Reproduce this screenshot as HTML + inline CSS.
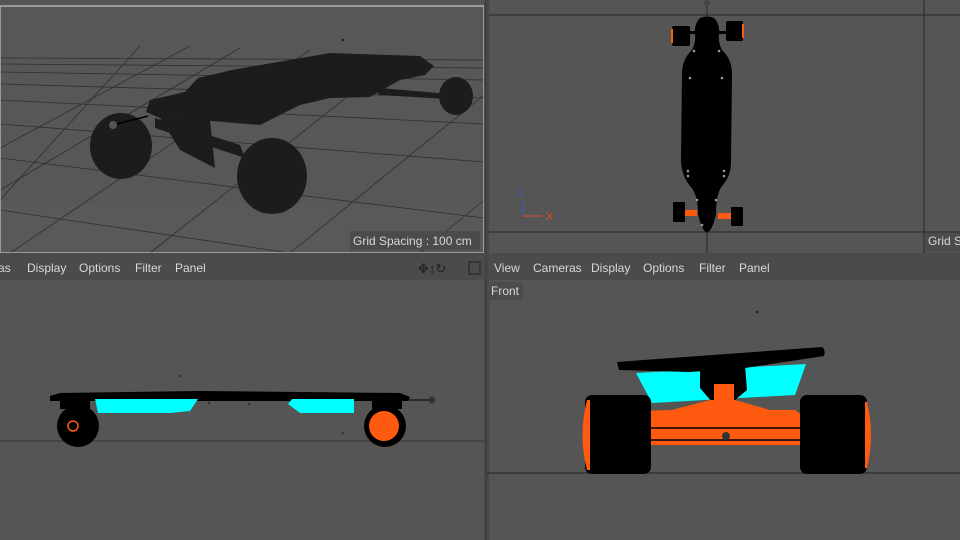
<!DOCTYPE html>
<html><head><meta charset="utf-8"><style>
html,body{margin:0;padding:0;background:#555;width:960px;height:540px;overflow:hidden}
svg{display:block}
text{font-family:"Liberation Sans",sans-serif;fill:#d8d8d8}
</style></head><body>
<svg width="960" height="540" viewBox="0 0 960 540" xmlns="http://www.w3.org/2000/svg">
<rect width="960" height="540" fill="#555"/>
<!-- TOP LEFT viewport -->
<rect x="0" y="6" width="484" height="247" fill="#575757"/>
<rect x="0" y="205" width="484" height="48" fill="#595959"/>
<g stroke="#2f2f2f" stroke-width="0.8" fill="none">
<line x1="0" y1="58" x2="484" y2="60"/>
<line x1="0" y1="64" x2="484" y2="68"/>
<line x1="0" y1="72" x2="484" y2="80"/>
<line x1="0" y1="84" x2="484" y2="98"/>
<line x1="0" y1="100" x2="484" y2="124"/>
<line x1="0" y1="124" x2="484" y2="162"/>
<line x1="0" y1="158" x2="484" y2="218"/>
<line x1="0" y1="210" x2="290" y2="253"/>
<line x1="0" y1="148" x2="190" y2="46"/>
<line x1="0" y1="190" x2="240" y2="48"/>
<line x1="10" y1="253" x2="310" y2="50"/>
<line x1="150" y1="253" x2="400" y2="55"/>
<line x1="290" y1="253" x2="484" y2="95"/>
<line x1="420" y1="253" x2="484" y2="200"/>
<line x1="0" y1="200" x2="140" y2="46"/>
</g>
<g fill="#1c1c1c">
<path d="M146,112 L150,100 L185,92 L198,78 L232,70 L330,53 L420,56 L434,66 L425,75 L400,80 L370,97 L330,98 L300,105 L260,125 L200,120 L160,118Z"/>
<ellipse cx="121" cy="146" rx="31" ry="33"/>
<ellipse cx="272" cy="176" rx="35" ry="38"/>
<ellipse cx="456" cy="96" rx="17" ry="19"/>
<path d="M155,118 L240,145 L245,158 L155,128Z"/>
<path d="M160,118 L180,150 L215,168 L210,120Z"/>
<path d="M380,88 L450,94 L448,99 L378,95Z"/>
</g>
<circle cx="113" cy="125" r="4" fill="#555"/>
<line x1="117" y1="124" x2="148" y2="116" stroke="#000" stroke-width="1.5"/>
<circle cx="343" cy="40" r="1.3" fill="#222"/>
<rect x="0" y="6" width="484" height="247" fill="none" stroke="#b0b0b0" stroke-width="1.5"/>
<rect x="350" y="231" width="130" height="19" rx="2" fill="#4b4b4b"/>
<text x="353" y="245" font-size="12">Grid Spacing : 100 cm</text>
<!-- divider -->
<rect x="484" y="0" width="5" height="540" fill="#484848"/>
<line x1="486" y1="0" x2="486" y2="540" stroke="#3a3a3a"/>
<!-- TOP RIGHT -->
<line x1="489" y1="15" x2="960" y2="15" stroke="#262626"/>
<line x1="489" y1="232" x2="960" y2="232" stroke="#262626"/>
<line x1="924" y1="0" x2="924" y2="253" stroke="#262626"/>
<line x1="707" y1="0" x2="707" y2="253" stroke="#262626"/>
<g fill="#000">
<path d="M700,18 Q707,15 714,18 Q720,24 719,34 Q718,42 722,50 Q731,58 732,72 L731,162 Q731,176 722,186 Q716,194 716,214 Q712,232 707,232 Q702,232 698,214 Q698,194 690,186 Q682,176 681,162 L682,72 Q683,58 692,50 Q696,42 695,34 Q694,24 700,18Z"/>
<rect x="672" y="26" width="18" height="20" rx="2"/>
<rect x="726" y="21" width="17" height="20" rx="2"/>
<rect x="673" y="202" width="12" height="20" rx="1"/>
<rect x="731" y="207" width="12" height="19" rx="1"/>
<rect x="688" y="31" width="40" height="3"/>
</g>
<rect x="671" y="29" width="2" height="14" fill="#ff5a10"/>
<rect x="742" y="24" width="2" height="14" fill="#ff5a10"/>
<rect x="685" y="210" width="12" height="6" fill="#ff5a10"/>
<rect x="718" y="213" width="13" height="6" fill="#ff5a10"/>
<g fill="#999"><circle cx="694" cy="51" r="1.3"/><circle cx="719" cy="51" r="1.3"/><circle cx="690" cy="78" r="1.3"/><circle cx="722" cy="78" r="1.3"/><circle cx="688" cy="171" r="1.3"/><circle cx="724" cy="171" r="1.3"/><circle cx="688" cy="176" r="1.3"/><circle cx="724" cy="176" r="1.3"/><circle cx="697" cy="200" r="1.3"/><circle cx="716" cy="200" r="1.3"/><circle cx="702" cy="225" r="1.3"/></g>
<circle cx="707" cy="3" r="3" fill="#444"/>
<line x1="523" y1="200" x2="523" y2="216" stroke="#3a5bc0"/>
<line x1="523" y1="216" x2="542" y2="216" stroke="#e05020"/>
<text x="519" y="196" font-size="9" style="fill:#4060c0">Z</text>
<text x="546" y="220" font-size="11" style="fill:#e05020">X</text>
<rect x="925" y="233" width="40" height="19" fill="#4b4b4b"/>
<text x="928" y="245" font-size="12">Grid S</text>
<!-- bottom strip -->
<rect x="0" y="253" width="960" height="3" fill="#4a4a4a"/>
<rect x="0" y="256" width="484" height="24" fill="#4b4b4b"/>
<rect x="489" y="256" width="471" height="24" fill="#4b4b4b"/>
<g font-size="12">
<text x="-6" y="272">ras</text><text x="27" y="272">Display</text><text x="79" y="272">Options</text><text x="135" y="272">Filter</text><text x="175" y="272">Panel</text>
<text x="494" y="272">View</text><text x="533" y="272">Cameras</text><text x="591" y="272">Display</text><text x="643" y="272">Options</text><text x="699" y="272">Filter</text><text x="739" y="272">Panel</text>
</g>
<text x="418" y="273" font-size="13" style="fill:#222">✥↕↻</text><rect x="469" y="262" width="11" height="12" fill="none" stroke="#222"/>
<rect x="487" y="282" width="36" height="18" rx="2" fill="#4c4c4c"/>
<text x="491" y="295" font-size="12">Front</text>
<!-- side view -->
<line x1="0" y1="441" x2="484" y2="441" stroke="#333"/>
<path d="M50,396 L60,393 L200,391 L400,393 L410,397 L408,401 L50,401Z" fill="#000"/>
<path d="M95,399 L198,399 L190,411 L170,413 L98,413Z" fill="#0ff"/>
<path d="M292,399 L354,399 L354,413 L300,413 L288,404Z" fill="#0ff"/>
<circle cx="78" cy="426" r="21" fill="#000"/>
<circle cx="385" cy="426" r="21" fill="#000"/>
<circle cx="384" cy="426" r="15" fill="#ff5a10"/>
<circle cx="73" cy="426" r="5" fill="none" stroke="#ff5a10" stroke-width="1.5"/>
<rect x="60" y="401" width="30" height="8" fill="#000"/>
<rect x="372" y="401" width="30" height="8" fill="#000"/>
<line x1="408" y1="400" x2="432" y2="400" stroke="#000"/>
<circle cx="432" cy="400" r="3.5" fill="#333"/>
<g fill="#333"><circle cx="180" cy="376" r="1.3"/><circle cx="209" cy="403" r="1.3"/><circle cx="249" cy="404" r="1.3"/><circle cx="343" cy="433" r="1.3"/></g>
<!-- front view -->
<line x1="487" y1="473" x2="960" y2="473" stroke="#222"/>
<circle cx="757" cy="312" r="1.4" fill="#222"/>
<path d="M636,373 L806,364 L795,395 L652,403Z" fill="#0ff"/>
<path d="M617,362 L822,347 Q826,350 824,356 L745,368 L690,372 L619,370Z" fill="#000"/>
<path d="M700,368 L745,365 L747,390 L735,400 L712,402 L700,388Z" fill="#000"/>
<rect x="714" y="384" width="20" height="16" fill="#ff5a10"/>
<path d="M640,411 L672,410 L710,400 L735,400 L770,410 L795,410 L815,425 L815,445 L630,445 L630,425Z" fill="#ff5a10"/>
<g stroke="#000" stroke-width="1.5"><line x1="630" y1="428" x2="815" y2="428"/><line x1="630" y1="440" x2="815" y2="440"/></g>
<circle cx="726" cy="436" r="4" fill="#333"/>
<rect x="585" y="395" width="66" height="79" rx="7" fill="#000"/>
<rect x="800" y="395" width="67" height="79" rx="7" fill="#000"/>
<path d="M587,400 Q578,435 587,470 L590,470 L590,400Z" fill="#ff5a10"/>
<path d="M866,402 Q874,435 866,468 L866,402Z" fill="#ff5a10" stroke="#ff5a10" stroke-width="2"/>
</svg>
</body></html>
